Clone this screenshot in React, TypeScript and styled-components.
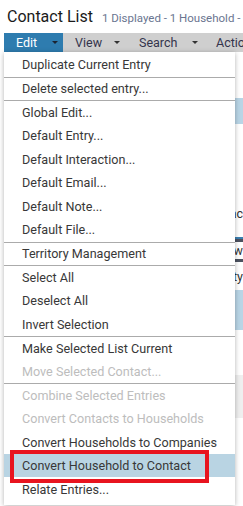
import styled, { createGlobalStyle } from "styled-components";

const GlobalStyle = createGlobalStyle`
  html, body {
    margin: 0;
    padding: 0;
    background: #fff;
    overflow: hidden;
  }
  body {
    font-family: Roboto, "Liberation Sans", sans-serif;
  }
`;

const Page = styled.div`
  position: relative;
  width: 243px;
  height: 506px;
  overflow: hidden;
`;

const Header = styled.div`
  display: flex;
  align-items: baseline;
  gap: 9px;
  height: 33px;
  padding: 4px 0 0 7px;
  box-sizing: border-box;
  white-space: nowrap;
`;
const Title = styled.div`
  font-size: 16px;
  color: #1a1a1a;
  line-height: 26px;
`;
const Subtitle = styled.div`
  font-size: 11.5px;
  color: #6a7590;
`;

const Toolbar = styled.div`
  display: flex;
  height: 19px;
  margin-left: 4px;
  background: #cfcfcf;
  white-space: nowrap;
`;
const ToolButton = styled.div<{ $active?: boolean; $w: number }>`
  display: flex;
  align-items: center;
  width: ${(p) => p.$w}px;
  flex: none;
  padding: 0 0 0 12px;
  box-sizing: border-box;
  font-size: 12.5px;
  background: ${(p) => (p.$active ? "#2e7caf" : "transparent")};
  color: ${(p) => (p.$active ? "#fff" : "#34344c")};
`;
const Arrow = styled.span<{ $at: number; $active?: boolean }>`
  margin-left: auto;
  margin-right: ${(p) => p.$at}px;
  width: 0;
  height: 0;
  border-left: 3.5px solid transparent;
  border-right: 3.5px solid transparent;
  border-top: 3.5px solid ${(p) => (p.$active ? "#1b2330" : "#333")};
`;

const Content = styled.div`
  margin-left: 8px;
  border-left: 1px solid #d0d0d0;
  display: flex;
  flex-direction: column;
`;
const Band = styled.div<{ $h: number; $bg?: string }>`
  height: ${(p) => p.$h}px;
  background: ${(p) => p.$bg || "transparent"};
  display: flex;
  align-items: center;
  justify-content: flex-end;
  font-size: 12.5px;
  color: #333;
  white-space: nowrap;
  overflow: hidden;
`;
const Rule = styled.div<{ $h: number; $c: string }>`
  height: ${(p) => p.$h}px;
  background: ${(p) => p.$c};
`;

const Menu = styled.div`
  position: absolute;
  left: 4px;
  top: 52px;
  width: 231px;
  padding: 1px 0 4px;
  background: #fff;
  box-shadow: 0 1px 5px rgba(0, 0, 0, 0.3);
  display: flex;
  flex-direction: column;
`;
const Item = styled.div<{ $sep?: boolean; $disabled?: boolean; $hover?: boolean }>`
  position: relative;
  height: 23.58px;
  box-sizing: border-box;
  display: flex;
  align-items: center;
  padding-left: 18px;
  font-size: 12.6px;
  white-space: nowrap;
  color: ${(p) => (p.$disabled ? "#bdbdbd" : "#383838")};
  background: ${(p) => (p.$hover ? "#b9d4e3" : "transparent")};
  border-top: ${(p) => (p.$sep ? "1px solid #ababab" : "none")};
`;
const Callout = styled.div`
  position: absolute;
  left: 6px;
  top: -4px;
  width: 199px;
  height: 33px;
  border: 4px solid #e8141f;
  box-sizing: border-box;
  pointer-events: none;
`;

type Entry = { label: string; sep?: boolean; disabled?: boolean; hover?: boolean };

const entries: Entry[] = [
  { label: "Duplicate Current Entry" },
  { label: "Delete selected entry...", sep: true },
  { label: "Global Edit...", sep: true },
  { label: "Default Entry..." },
  { label: "Default Interaction..." },
  { label: "Default Email..." },
  { label: "Default Note..." },
  { label: "Default File..." },
  { label: "Territory Management", sep: true },
  { label: "Select All", sep: true },
  { label: "Deselect All" },
  { label: "Invert Selection" },
  { label: "Make Selected List Current", sep: true },
  { label: "Move Selected Contact...", disabled: true },
  { label: "Combine Selected Entries", sep: true, disabled: true },
  { label: "Convert Contacts to Households", disabled: true },
  { label: "Convert Households to Companies" },
  { label: "Convert Household to Contact", hover: true },
  { label: "Relate Entries..." },
];

export default function App() {
  return (
    <Page>
      <GlobalStyle />
      <Header>
        <Title>Contact List</Title>
        <Subtitle>1 Displayed - 1 Household - 1 Company</Subtitle>
      </Header>
      <Toolbar>
        <ToolButton $active $w={59}>
          Edit
          <Arrow $active $at={5} />
        </ToolButton>
        <ToolButton $w={64}>
          View
          <Arrow $at={7} />
        </ToolButton>
        <ToolButton $w={77}>
          Search
          <Arrow $at={6} />
        </ToolButton>
        <ToolButton $w={80}>Actions</ToolButton>
      </Toolbar>
      <Content>
        <Band $h={46} />
        <Band $h={26} $bg="#b9d5e6" />
        <Band $h={66} />
        <Band $h={47}>Contac</Band>
        <Rule $h={2} $c="#3b7fb0" />
        <Rule $h={3} $c="#4c5260" />
        <Band $h={17}>Overview</Band>
        <Rule $h={3} $c="#4c5260" />
        <Band $h={28}>Quality</Band>
        <Band $h={40} $bg="#b9d5e6" />
        <Band $h={45} />
        <Band $h={43} $bg="#efefef" />
        <Band $h={80} />
      </Content>
      <Menu>
        {entries.map((e) => (
          <Item key={e.label} $sep={e.sep} $disabled={e.disabled} $hover={e.hover}>
            {e.label}
            {e.hover && <Callout />}
          </Item>
        ))}
      </Menu>
    </Page>
  );
}
